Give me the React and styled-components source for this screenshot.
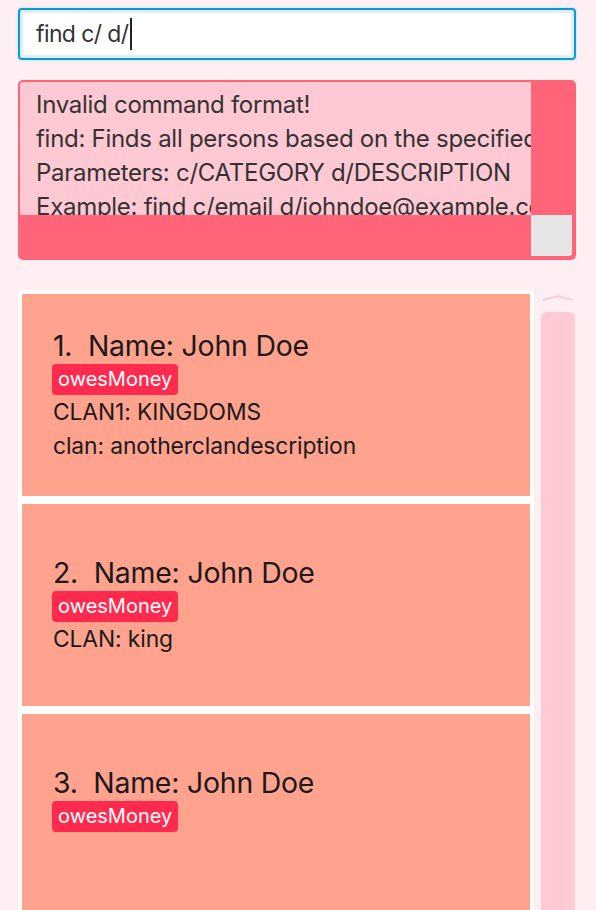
import styled, { createGlobalStyle } from "styled-components";

const GlobalStyle = createGlobalStyle`
  body {
    margin: 0;
    background: #ffeef2;
    font-family: Inter, "Open Sans", sans-serif;
  }
`;

const Page = styled.div`
  display: flex;
  flex-direction: column;
  padding: 8px 20px 0 18px;
  height: 902px;
  overflow: hidden;
`;

const CommandBox = styled.div`
  height: 52px;
  box-sizing: border-box;
  border: 2px solid #0b9bd2;
  border-radius: 4px;
  background: #fff;
  box-shadow: inset 0 0 2px 3px #dcedf7, 0 0 2px 1px #d2e9f5;
  display: flex;
  align-items: center;
  padding-left: 16px;
  font-size: 23px;
  letter-spacing: -0.6px;
  white-space: pre;
  color: #333;
`;

const Caret = styled.span`
  display: inline-block;
  width: 2px;
  height: 32px;
  background: #222;
  margin-left: 1px;
`;

const ResultBox = styled.div`
  margin-top: 20px;
  height: 180px;
  box-sizing: border-box;
  border: 2px solid #ff6478;
  border-radius: 5px;
  background: #ff6478;
  display: grid;
  grid-template-columns: 511px 1fr;
  grid-template-rows: 133px 1fr;
  overflow: hidden;
`;

const ResultText = styled.div`
  background: #ffc9d3;
  padding: 6px 0 0 16px;
  font-size: 24px;
  line-height: 34px;
  letter-spacing: -0.28px;
  color: #333;
  white-space: nowrap;
  overflow: hidden;
`;

const ScrollTrack = styled.div`
  background: #ff6478;
`;

const ScrollCorner = styled.div`
  grid-column: 2;
  grid-row: 2;
  width: 41px;
  height: 41px;
  background: #e6e6e6;
  border-bottom-right-radius: 3px;
`;

const ListArea = styled.div`
  margin-top: 30px;
  display: flex;
  flex: 1;
  min-height: 0;
`;

const ListPanel = styled.div`
  width: 516px;
  box-sizing: border-box;
  background: #fff;
  padding: 4px 4px 0 4px;
  display: flex;
  flex-direction: column;
  gap: 8px;
`;

const Card = styled.div`
  flex-shrink: 0;
  height: 202px;
  background: #ffa28e;
  padding-left: 31px;
  display: flex;
  flex-direction: column;
  justify-content: center;
  color: #1a1a1a;
`;

const Name = styled.div`
  font-size: 28.4px;
  line-height: 34px;
  letter-spacing: -0.2px;
  white-space: pre;
  margin-top: 2px;
`;

const Tags = styled.div`
  display: flex;
  gap: 6px;
  margin-top: 1px;
`;

const Tag = styled.span`
  background: #ff2b4f;
  color: #fff;
  font-size: 20px;
  line-height: 31px;
  padding: 0 6px;
  border-radius: 4px;
  margin-left: -1px;
`;

const Details = styled.div`
  min-height: 34px;
`;

const Detail = styled.div`
  font-size: 22.8px;
  line-height: 34px;
  letter-spacing: -0.1px;
`;

const ScrollColumn = styled.div`
  width: 42px;
  display: flex;
  flex-direction: column;
  align-items: center;
  padding-left: 6px;
  box-sizing: border-box;
`;

const Arrow = styled.svg`
  margin-top: 3px;
  width: 34px;
  height: 8px;
`;

const Thumb = styled.div`
  margin-top: 11px;
  width: 34px;
  flex: 1;
  background: #ffcad4;
  border-radius: 6px 6px 0 0;
`;

const persons = [
  {
    name: "John Doe",
    tags: ["owesMoney"],
    details: ["CLAN1: KINGDOMS", "clan: anotherclandescription"],
  },
  { name: "John Doe", tags: ["owesMoney"], details: ["CLAN: king"] },
  { name: "John Doe", tags: ["owesMoney"], details: [] },
];

function PersonCard({ index, person }) {
  return (
    <Card>
      <Name>{`${index}.  Name: ${person.name}`}</Name>
      <Tags>
        {person.tags.map((t) => (
          <Tag key={t}>{t}</Tag>
        ))}
      </Tags>
      <Details>
        {person.details.map((d) => (
          <Detail key={d}>{d}</Detail>
        ))}
      </Details>
    </Card>
  );
}

export default function App() {
  return (
    <>
      <GlobalStyle />
      <Page>
        <CommandBox>
          find c/ d/
          <Caret />
        </CommandBox>
        <ResultBox>
          <ResultText>
            <div>Invalid command format!</div>
            <div>find: Finds all persons based on the specified category and description.</div>
            <div>Parameters: c/CATEGORY d/DESCRIPTION</div>
            <div>Example: find c/email d/johndoe@example.com</div>
          </ResultText>
          <ScrollTrack />
          <ScrollTrack />
          <ScrollCorner />
        </ResultBox>
        <ListArea>
          <ListPanel>
            {persons.map((p, i) => (
              <PersonCard key={i} index={i + 1} person={p} />
            ))}
          </ListPanel>
          <ScrollColumn>
            <Arrow viewBox="0 0 34 8">
              <polyline points="2,7 17,3 32,7" fill="none" stroke="#ffc2cd" strokeWidth="1.6" />
            </Arrow>
            <Thumb />
          </ScrollColumn>
        </ListArea>
      </Page>
    </>
  );
}
